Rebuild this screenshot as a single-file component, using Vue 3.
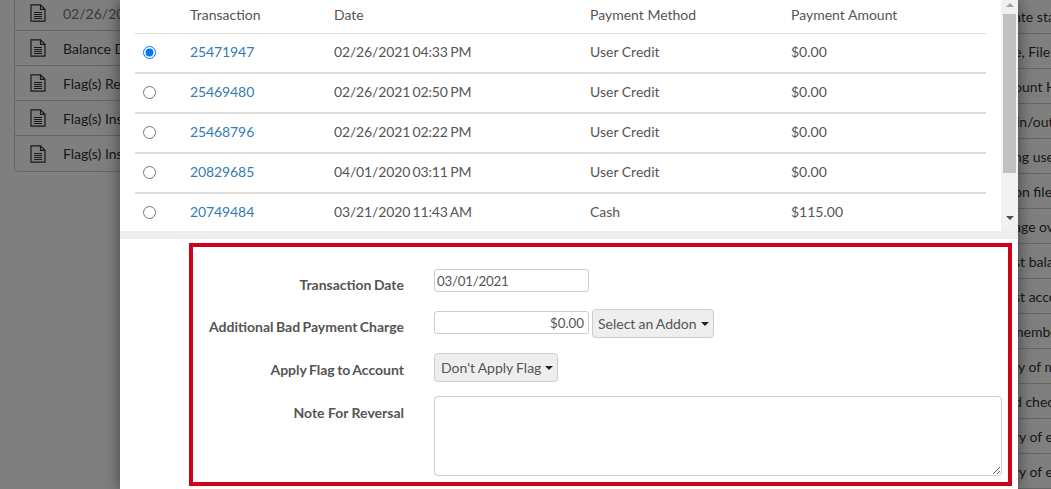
<script setup>
const leftRows = ['02/26/2021 04:33 PM', 'Balance Due', 'Flag(s) Removed', 'Flag(s) Inserted', 'Flag(s) Inserted']
const rightRows = [
  { pre: 'Upd', text: 'ate status', start: 1014 },
  { pre: 'Typ', text: 'e, File', start: 1014 },
  { pre: 'Acc', text: 'ount H', start: 1014 },
  { pre: 'Check ', text: 'in/out', start: 1016 },
  { pre: 'Addi', text: 'ng user', start: 1014 },
  { pre: 'Card ', text: 'on file', start: 1014 },
  { pre: 'Mess', text: 'age over', start: 1014 },
  { pre: 'Adju', text: 'st balance', start: 1014 },
  { pre: 'Adju', text: 'st account', start: 1014 },
  { pre: 'Add ', text: 'member', start: 1012 },
  { pre: 'Summa', text: 'ry of m', start: 1013 },
  { pre: 'Vali', text: 'd check', start: 1014 },
  { pre: 'Summa', text: 'ry of e', start: 1014 },
  { pre: 'Summa', text: 'ry of e', start: 1014 }
]
const panelRightLeft = 851
const transactions = [
  { id: '25471947', date: '02/26/2021 04:33 PM', method: 'User Credit', amount: '$0.00', on: true },
  { id: '25469480', date: '02/26/2021 02:50 PM', method: 'User Credit', amount: '$0.00' },
  { id: '25468796', date: '02/26/2021 02:22 PM', method: 'User Credit', amount: '$0.00' },
  { id: '20829685', date: '04/01/2020 03:11 PM', method: 'User Credit', amount: '$0.00' },
  { id: '20749484', date: '03/21/2020 11:43 AM', method: 'Cash', amount: '$115.00' }
]
</script>

<template>
  <div class="page">
    <div class="under">
      <div class="panel-left">
        <div v-for="(r, i) in leftRows" :key="i" class="left-row" :class="{ muted: i === 0 }">
          <svg class="doc" width="16" height="18" viewBox="0 0 16 18" fill="none" stroke="#333" stroke-width="1.2">
            <path d="M1 .8H10.5L15 5.3V17.2H1Z" />
            <path d="M10.5 .8V5.3H15" />
            <path d="M4 8.5H12M4 10.5H12M4 12.5H12M4 14.5H12" stroke-width="1.1" />
          </svg>
          <span>{{ r }}</span>
        </div>
      </div>
      <div class="panel-right">
        <div v-for="(r, i) in rightRows" :key="i" class="right-row">
          <span class="pre" :style="{ width: r.start - panelRightLeft + 'px' }">{{ r.pre }}</span><span>{{ r.text }}</span>
        </div>
      </div>
    </div>
    <div class="backdrop"></div>
    <div class="modal">
      <div class="scroller">
        <div class="table-wrap">
          <div class="trow thead">
            <span></span><span>Transaction</span><span>Date</span><span>Payment Method</span><span>Payment Amount</span>
          </div>
          <div v-for="t in transactions" :key="t.id" class="trow">
            <span class="radio-cell"><input type="radio" name="tx" :checked="t.on" /></span>
            <a class="link">{{ t.id }}</a>
            <span class="date">{{ t.date }}</span>
            <span>{{ t.method }}</span>
            <span>{{ t.amount }}</span>
          </div>
        </div>
        <div class="scrollbar">
          <i class="arrow up"></i>
          <div class="thumb"></div>
          <i class="arrow down"></i>
        </div>
      </div>
      <div class="strip"></div>
      <div class="redbox">
        <div class="frow r1">
          <label>Transaction Date</label>
          <input class="field" type="text" value="03/01/2021" />
        </div>
        <div class="frow r2">
          <label>Additional Bad Payment Charge</label>
          <input class="field right" type="text" value="$0.00" />
          <button class="btn">Select an Addon<i class="caret"></i></button>
        </div>
        <div class="frow r3">
          <label>Apply Flag to Account</label>
          <button class="btn flag">Don't Apply Flag<i class="caret"></i></button>
        </div>
        <div class="frow r4">
          <label>Note For Reversal</label>
          <textarea class="note"></textarea>
        </div>
      </div>
    </div>
  </div>
</template>

<style>
html, body { margin: 0; background: #fff; }
</style>

<style scoped>
.page {
  position: relative;
  width: 1051px;
  height: 489px;
  overflow: hidden;
  font-family: Lato, sans-serif;
  font-size: 14px;
  font-kerning: normal;
  text-rendering: optimizeLegibility;
  color: #555;
  background: #fff;
}
.under {
  display: flex;
  justify-content: space-between;
  align-items: flex-start;
}
.panel-left {
  width: 400px;
  margin-left: 14px;
  margin-top: -4px;
  border: 1px solid #ccc;
  border-top: 0;
  border-radius: 0 0 4px 4px;
}
.left-row {
  display: flex;
  align-items: center;
  gap: 17px;
  height: 35px;
  box-sizing: border-box;
  padding-left: 15px;
  border-bottom: 1px solid #ccc;
  color: #333;
  white-space: nowrap;
}
.left-row:last-child { border-bottom: 0; }
.left-row.muted { color: #777; }
.panel-right {
  width: 200px;
  margin-top: -1px;
}
.right-row {
  display: flex;
  align-items: center;
  height: 35px;
  box-sizing: border-box;
  border-bottom: 1px solid #ccc;
  white-space: nowrap;
  color: #333;
}
.pre {
  flex: none;
  text-align: right;
  white-space: pre;
}
.backdrop {
  position: absolute;
  inset: 0;
  background: rgba(0, 0, 0, 0.5);
}
.modal {
  position: absolute;
  left: 120px;
  top: 0;
  width: 898px;
  height: 489px;
  background: #fff;
  box-shadow: 0 0 15px rgba(0, 0, 0, 0.5);
}
.scroller {
  display: flex;
  height: 231px;
  overflow: hidden;
}
.table-wrap {
  flex: 1;
  padding: 0 15px;
  min-width: 0;
}
.trow {
  display: grid;
  grid-template-columns: 55px 144px 256px 201px 1fr;
  align-items: center;
  height: 40px;
  box-sizing: border-box;
  padding-bottom: 2px;
  border-bottom: 2px solid #ddd;
  line-height: 20px;
}
.trow:last-child { border-bottom-color: transparent; }
.thead {
  height: 34px;
  padding-bottom: 4px;
  border-bottom-width: 1px;
}
.date {
  word-spacing: -1px;
  letter-spacing: -0.15px;
}
.radio-cell {
  display: flex;
  padding-left: 8px;
}
.radio-cell input { margin: 0; width: 13px; height: 13px; }
.link { color: #337ab7; letter-spacing: -0.1px; }
.scrollbar {
  flex: none;
  width: 17px;
  background: #f1f1f1;
  display: flex;
  flex-direction: column;
  align-items: center;
}
.arrow {
  width: 0;
  height: 0;
  border-left: 4px solid transparent;
  border-right: 4px solid transparent;
}
.arrow.up {
  margin-top: 3px;
  border-bottom: 4px solid #a3a3a3;
}
.arrow.down {
  margin-top: 43px;
  border-top: 4px solid #505050;
}
.thumb {
  width: 13px;
  height: 159px;
  margin-top: 7px;
  background: #c1c1c1;
}
.strip {
  height: 8px;
  background: #eee;
}
.redbox {
  margin: 4px 6px 0 69px;
  height: 243px;
  box-sizing: border-box;
  border: 4px solid #d0021b;
  display: flex;
  flex-direction: column;
}
.frow {
  display: flex;
  align-items: flex-start;
}
.frow label {
  width: 211px;
  flex: none;
  margin-right: 30px;
  text-align: right;
  font-weight: 700;
  line-height: 20px;
  white-space: nowrap;
  word-spacing: -1px;
}
.r1 { margin-top: 22px; }
.r1 label { padding-top: 6px; }
.r2 { margin-top: 14px; }
.r2 label { padding-top: 8px; }
.r3 { margin-top: 15px; }
.r3 label { padding-top: 7px; }
.r4 { margin-top: 14px; }
.r4 label { padding-top: 7px; word-spacing: 0; }
.field {
  width: 155px;
  height: 23px;
  box-sizing: border-box;
  padding: 0 4px 0 2px;
  border: 1px solid #ccc;
  border-radius: 3px;
  font: 13.33px Lato, sans-serif;
  letter-spacing: -0.25px;
  text-rendering: optimizeLegibility;
  color: #555;
  background: #fff;
  outline: none;
}
.field.right { text-align: right; margin-top: 2px; letter-spacing: 0; }
.btn {
  height: 29px;
  box-sizing: border-box;
  margin-left: 3px;
  padding: 0 4px 0 5px;
  border: 1px solid #ccc;
  border-radius: 4px;
  background: #eee;
  color: #555;
  font: 14px Lato, sans-serif;
  word-spacing: -0.5px;
  text-rendering: optimizeLegibility;
  display: inline-flex;
  align-items: center;
  white-space: nowrap;
}
.btn.flag { margin-left: 0; padding-left: 6px; }
.caret {
  margin-left: 4px;
  width: 0;
  height: 0;
  border-left: 4px solid transparent;
  border-right: 4px solid transparent;
  border-top: 4px solid #222;
}
.note {
  display: block;
  width: 568px;
  height: 80px;
  box-sizing: border-box;
  border: 1px solid #ccc;
  border-radius: 4px;
  outline: none;
  margin: 0;
}
</style>
